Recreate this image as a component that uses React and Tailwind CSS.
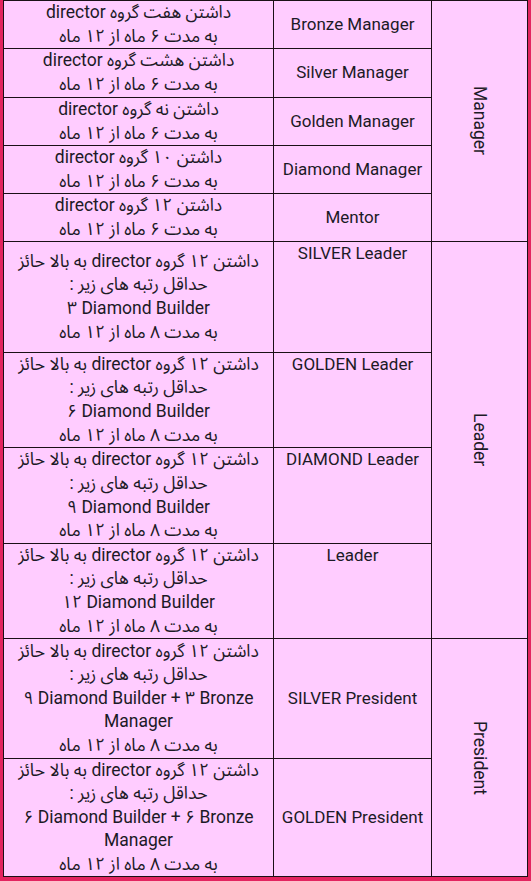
import React from 'react';

// Rank requirements table (pink sheet, crimson frame)

const rows = [
  { req: ['داشتن هفت گروه director', 'به مدت ۶ ماه از ۱۲ ماه'], rank: 'Bronze Manager' },
  { req: ['داشتن هشت گروه director', 'به مدت ۶ ماه از ۱۲ ماه'], rank: 'Silver Manager' },
  { req: ['داشتن نه گروه director', 'به مدت ۶ ماه از ۱۲ ماه'], rank: 'Golden Manager' },
  { req: ['داشتن ۱۰ گروه director', 'به مدت ۶ ماه از ۱۲ ماه'], rank: 'Diamond Manager' },
  { req: ['داشتن ۱۲ گروه director', 'به مدت ۶ ماه از ۱۲ ماه'], rank: 'Mentor' },
  { req: ['داشتن ۱۲ گروه director به بالا حائز', 'حداقل رتبه های زیر :', ['۳ Diamond Builder'], 'به مدت ۸ ماه از ۱۲ ماه'], rank: 'SILVER Leader', top: true },
  { req: ['داشتن ۱۲ گروه director به بالا حائز', 'حداقل رتبه های زیر :', ['۶ Diamond Builder'], 'به مدت ۸ ماه از ۱۲ ماه'], rank: 'GOLDEN Leader', top: true },
  { req: ['داشتن ۱۲ گروه director به بالا حائز', 'حداقل رتبه های زیر :', ['۹ Diamond Builder'], 'به مدت ۸ ماه از ۱۲ ماه'], rank: 'DIAMOND Leader', top: true },
  { req: ['داشتن ۱۲ گروه director به بالا حائز', 'حداقل رتبه های زیر :', ['۱۲ Diamond Builder'], 'به مدت ۸ ماه از ۱۲ ماه'], rank: 'Leader', top: true },
  { req: ['داشتن ۱۲ گروه director به بالا حائز', 'حداقل رتبه های زیر :', ['۹ Diamond Builder + ۳ Bronze'], ['Manager'], 'به مدت ۸ ماه از ۱۲ ماه'], rank: 'SILVER President' },
  { req: ['داشتن ۱۲ گروه director به بالا حائز', 'حداقل رتبه های زیر :', ['۶ Diamond Builder + ۶ Bronze'], ['Manager'], 'به مدت ۸ ماه از ۱۲ ماه'], rank: 'GOLDEN President' },
];

const groups = {
  0: { label: 'Manager', span: 'row-span-5' },
  5: { label: 'Leader', span: 'row-span-4' },
  9: { label: 'President', span: 'row-span-2' },
};

function Requirement({ lines }) {
  return (
    <div dir="rtl" className="flex flex-col items-center justify-center bg-[#ffccff] text-center">
      {lines.map((line, i) =>
        Array.isArray(line) ? (
          <div key={i} dir="ltr" className="whitespace-nowrap text-[17.5px]">{line[0]}</div>
        ) : (
          <div key={i} className="whitespace-nowrap text-[17.5px]">{line}</div>
        )
      )}
    </div>
  );
}

export default function App() {
  return (
    <div className="w-[531px] h-[881px] bg-[#e2255f] pl-[3px] pr-[3px] pb-[4px]">
      <div
        className="grid grid-cols-[269px_157px_95px] grid-rows-[47px_48px_47px_47px_47px_110px_94px_95px_94px_119px_117px] gap-px bg-[#1a1016] p-px text-[17px] leading-[23.6px] text-[#1c1a26]"
        style={{ fontFamily: 'Roboto, "Noto Sans Arabic", "DejaVu Sans", sans-serif' }}
      >
        {rows.map((row, i) => (
          <React.Fragment key={i}>
            <Requirement lines={row.req} />
            <div
              className={
                row.top
                  ? 'flex items-start justify-center bg-[#ffccff] text-center'
                  : 'flex items-center justify-center bg-[#ffccff] text-center'
              }
            >
              {row.rank}
            </div>
            {groups[i] && (
              <div className={`${groups[i].span} flex items-center justify-center bg-[#ffccff]`}>
                <span className="[writing-mode:vertical-rl] text-[17.5px]">{groups[i].label}</span>
              </div>
            )}
          </React.Fragment>
        ))}
      </div>
    </div>
  );
}
